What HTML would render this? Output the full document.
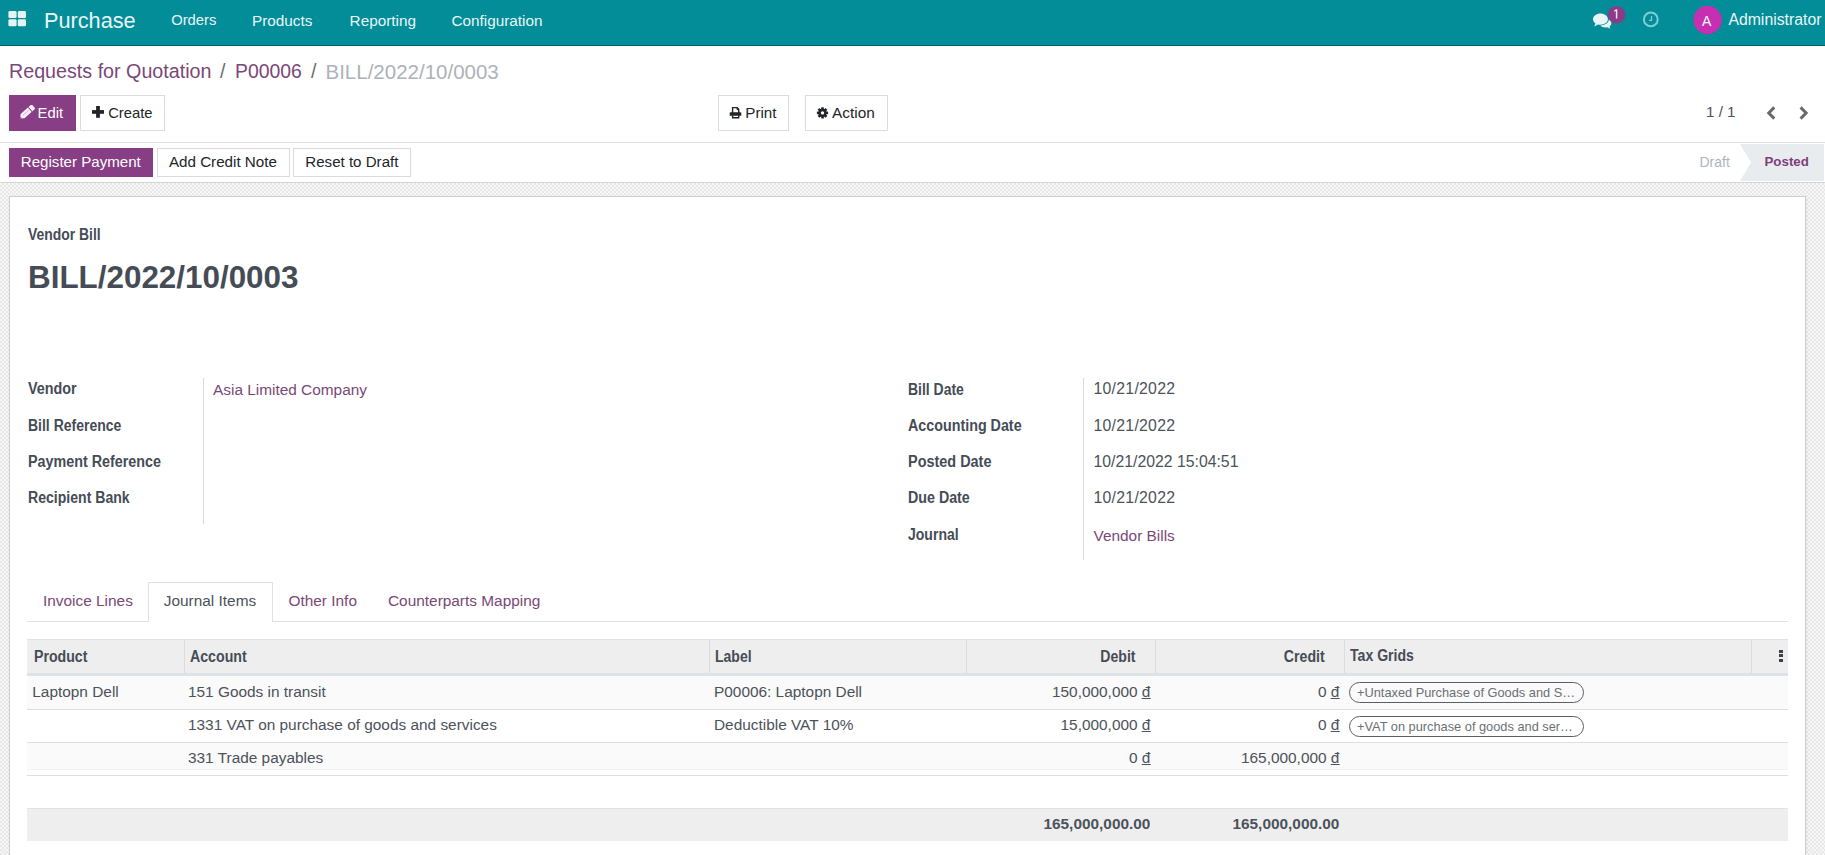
<!DOCTYPE html>
<html><head><meta charset="utf-8">
<style>
*{margin:0;padding:0;box-sizing:border-box}
html,body{width:1825px;height:855px;overflow:hidden;background:#fff;font-family:"Liberation Sans",sans-serif;color:#4c525b}
.a{position:absolute}
.t{position:absolute;white-space:nowrap;line-height:1}
.b{font-weight:bold}
#nav{left:0;top:0;width:1825px;height:46px;background:#028d99;border-bottom:1px solid #035d66}
.nv{color:#e9f6f7;font-size:15.3px}
.btn{position:absolute;border:1px solid #dcdcdc;background:#fff}
.bp{position:absolute;background:#873e84}

#bg{left:0;top:183px;width:1825px;height:672px;
 background-color:#f7f7f7;
 background-image:linear-gradient(45deg,#e8e8e8 25%,transparent 25%,transparent 75%,#e8e8e8 75%),linear-gradient(45deg,#e8e8e8 25%,transparent 25%,transparent 75%,#e8e8e8 75%);
 background-size:4px 4px;background-position:0 0,2px 2px}
#sheet{left:9px;top:196px;width:1797px;height:700px;background:#fff;border:1px solid #cfcfcf;box-shadow:1px 1px 2px rgba(0,0,0,.06)}
.lbl{font-size:15.8px;font-weight:bold;color:#454c56;transform-origin:0 0;margin-top:.7px}
.lbr{transform-origin:100% 0}
.val{font-size:15.4px;color:#4c525b}
.row{position:absolute;left:27px;width:1761px}
.lnk,.val.lnk{color:#7a4878}
.dg{text-decoration:underline;text-underline-offset:1px;text-decoration-thickness:1px}
</style></head><body>
<!-- NAVBAR -->
<div id="nav" class="a"></div>
<svg class="a" style="left:8px;top:11px" width="19" height="16" viewBox="0 0 19 16">
 <rect x="0.4" y="0.1" width="8.2" height="7" rx="1.3" fill="#e6f3f3"/>
 <rect x="9.8" y="0.1" width="8.2" height="7" rx="1.3" fill="#e6f3f3"/>
 <rect x="0.4" y="8.3" width="8.2" height="6.9" rx="1.3" fill="#e6f3f3"/>
 <rect x="9.8" y="8.3" width="8.2" height="6.9" rx="1.3" fill="#e6f3f3"/>
</svg>
<div class="t nv" style="left:44px;top:9.6px;font-size:21.7px">Purchase</div>
<div class="t nv" style="left:171.2px;top:13px;font-size:14.8px">Orders</div>
<div class="t nv" style="left:252px;top:12.6px">Products</div>
<div class="t nv" style="left:349.6px;top:12.6px">Reporting</div>
<div class="t nv" style="left:451.5px;top:12.6px">Configuration</div>

<div class="t nv" style="left:1728.4px;top:11.9px;font-size:15.8px">Administrator</div>

<!-- CONTROL PANEL -->
<div class="t lnk" style="left:9px;top:61.6px;font-size:19.7px">Requests for Quotation</div>
<div class="t" style="left:220px;top:61.6px;font-size:19.7px;color:#6c6c6c">/</div>
<div class="t lnk" style="left:235px;top:61.6px;font-size:19.4px">P00006</div>
<div class="t" style="left:311px;top:61.6px;font-size:19.7px;color:#6c6c6c">/</div>
<div class="t" style="left:325.5px;top:61.6px;font-size:20.5px;color:#adb3b9">BILL/2022/10/0003</div>

<div class="bp" style="left:9px;top:95px;width:67px;height:36px"></div>
<div class="t" style="left:37.6px;top:105.9px;font-size:14.8px;color:#fff">Edit</div>
<div class="btn" style="left:80px;top:95px;width:85px;height:36px"></div>
<div class="t" style="left:108.2px;top:105.9px;font-size:14.8px;color:#212529">Create</div>

<div class="btn" style="left:718px;top:95px;width:71px;height:36px"></div>
<div class="t" style="left:745.3px;top:105px;font-size:15.2px;color:#212529">Print</div>
<div class="btn" style="left:805px;top:95px;width:83px;height:36px"></div>
<div class="t" style="left:832px;top:105px;font-size:15.4px;color:#212529">Action</div>

<div class="t" style="left:1706px;top:104px;font-size:15.2px;color:#4c525b">1 / 1</div>

<div class="a" style="left:0;top:142px;width:1825px;height:1px;background:#dedede"></div>

<!-- STATUS BAR -->
<div class="bp" style="left:9px;top:148px;width:144px;height:29px"></div>
<div class="t" style="left:20.8px;top:154px;font-size:15.1px;color:#fff">Register Payment</div>
<div class="btn" style="left:157px;top:148px;width:133px;height:29px"></div>
<div class="t" style="left:168.9px;top:154px;font-size:15.2px;color:#212529">Add Credit Note</div>
<div class="btn" style="left:293px;top:148px;width:118px;height:29px"></div>
<div class="t" style="left:305.3px;top:154px;font-size:15.1px;color:#212529">Reset to Draft</div>

<div class="t" style="left:1699.5px;top:154.8px;font-size:14px;color:#adb5bd">Draft</div>
<div class="a" style="left:1740px;top:144px;width:84px;height:37px;background:#e9ecef;clip-path:polygon(0 0,100% 0,100% 100%,0 100%,11px 50%)"></div>
<div class="t b" style="left:1764.5px;top:154.6px;font-size:13.3px;color:#7c3f7c">Posted</div>
<div class="a" style="left:0;top:182px;width:1825px;height:1px;background:#d4d4d4"></div>

<!-- BACKGROUND + SHEET -->
<div id="bg" class="a"></div>
<div id="sheet" class="a"></div>

<div class="t lbl" style="left:28.2px;top:226.3px;transform:scaleX(0.881)">Vendor Bill</div>
<div class="t b" style="left:28px;top:261.5px;font-size:31.4px;color:#454c56">BILL/2022/10/0003</div>


<!-- FORM GROUPS -->
<div class="t lbl" style="left:28px;top:380.3px;transform:scaleX(0.909)">Vendor</div>
<div class="t lbl" style="left:28px;top:417.4px;transform:scaleX(0.885)">Bill Reference</div>
<div class="t lbl" style="left:28px;top:453.3px;transform:scaleX(0.907)">Payment Reference</div>
<div class="t lbl" style="left:28px;top:489.6px;transform:scaleX(0.891)">Recipient Bank</div>
<div class="a" style="left:203px;top:378px;width:1px;height:146px;background:#d9d9d9"></div>
<div class="t val lnk" style="left:213px;top:381.7px">Asia Limited Company</div>

<div class="t lbl" style="left:908.3px;top:381.0px;transform:scaleX(0.884)">Bill Date</div>
<div class="t lbl" style="left:908.3px;top:417.3px;transform:scaleX(0.905)">Accounting Date</div>
<div class="t lbl" style="left:908.3px;top:453.3px;transform:scaleX(0.914)">Posted Date</div>
<div class="t lbl" style="left:908.3px;top:489.5px;transform:scaleX(0.902)">Due Date</div>
<div class="t lbl" style="left:908.3px;top:526.4px;transform:scaleX(0.888)">Journal</div>
<div class="a" style="left:1083px;top:378px;width:1px;height:182px;background:#d9d9d9"></div>
<div class="t val" style="left:1093.5px;top:381.4px;font-size:15.8px;letter-spacing:.27px">10/21/2022</div>
<div class="t val" style="left:1093.5px;top:417.7px;font-size:15.8px;letter-spacing:.27px">10/21/2022</div>
<div class="t val" style="left:1093.5px;top:453.7px;font-size:15.8px">10/21/2022 15:04:51</div>
<div class="t val" style="left:1093.5px;top:489.9px;font-size:15.8px;letter-spacing:.27px">10/21/2022</div>
<div class="t val lnk" style="left:1093.5px;top:527.8px">Vendor Bills</div>

<!-- TABS -->
<div class="a" style="left:27px;top:621px;width:1761px;height:1px;background:#dee2e6"></div>
<div class="a" style="left:148px;top:582px;width:125px;height:40px;background:#fff;border:1px solid #dee2e6;border-bottom:none"></div>
<div class="t val lnk" style="left:43px;top:592.9px">Invoice Lines</div>
<div class="t val" style="left:163.8px;top:592.9px">Journal Items</div>
<div class="t val lnk" style="left:288.5px;top:592.9px">Other Info</div>
<div class="t val lnk" style="left:388px;top:592.9px">Counterparts Mapping</div>

<!-- TABLE -->
<div class="a" style="left:27px;top:639px;width:1761px;height:34px;background:#eeeeee;border-top:1px solid #e2e2e2"></div>
<div class="a" style="left:27px;top:673px;width:1761px;height:3px;background:#dee2e6"></div>
<div class="a" style="left:184px;top:640px;width:1px;height:33px;background:#dcdcdc"></div>
<div class="a" style="left:709px;top:640px;width:1px;height:33px;background:#dcdcdc"></div>
<div class="a" style="left:966px;top:640px;width:1px;height:33px;background:#dcdcdc"></div>
<div class="a" style="left:1155px;top:640px;width:1px;height:33px;background:#dcdcdc"></div>
<div class="a" style="left:1344px;top:640px;width:1px;height:33px;background:#dcdcdc"></div>
<div class="a" style="left:1751px;top:640px;width:1px;height:33px;background:#dcdcdc"></div>
<div class="t lbl" style="left:33.5px;top:648.4px;transform:scaleX(0.895)">Product</div>
<div class="t lbl" style="left:189.5px;top:648.4px;transform:scaleX(0.897)">Account</div>
<div class="t lbl" style="left:715.4px;top:648.4px;transform:scaleX(0.887)">Label</div>
<div class="t lbl lbr" style="right:689.5px;top:648.4px;transform:scaleX(0.891)">Debit</div>
<div class="t lbl lbr" style="right:500px;top:648.4px;transform:scaleX(0.894)">Credit</div>
<div class="t lbl" style="left:1350.3px;top:647.2px;transform:scaleX(0.892)">Tax Grids</div>

<div class="a" style="left:27px;top:676px;width:1761px;height:33px;background:#fafafa"></div>
<div class="a" style="left:27px;top:709px;width:1761px;height:1px;background:#dedede"></div>
<div class="a" style="left:27px;top:742px;width:1761px;height:1px;background:#dedede"></div>
<div class="a" style="left:27px;top:743px;width:1761px;height:26px;background:#fafafa"></div>
<div class="a" style="left:27px;top:769px;width:1761px;height:1px;background:#f3f3f3"></div>
<div class="a" style="left:27px;top:775px;width:1761px;height:1px;background:#dedede"></div>

<div class="t val" style="left:32.3px;top:684px">Laptopn Dell</div>
<div class="t val" style="left:188px;top:684px">151 Goods in transit</div>
<div class="t val" style="left:714px;top:684px">P00006: Laptopn Dell</div>
<div class="t val" style="right:674.6px;top:684px">150,000,000 <u><span class="dg">đ</span></u></div>
<div class="t val" style="right:485.6px;top:684px">0 <u><span class="dg">đ</span></u></div>

<div class="t val" style="left:188px;top:716.7px">1331 VAT on purchase of goods and services</div>
<div class="t val" style="left:714px;top:716.7px">Deductible VAT 10%</div>
<div class="t val" style="right:674.6px;top:716.7px">15,000,000 <u><span class="dg">đ</span></u></div>
<div class="t val" style="right:485.6px;top:716.7px">0 <u><span class="dg">đ</span></u></div>

<div class="t val" style="left:188px;top:750.2px">331 Trade payables</div>
<div class="t val" style="right:674.6px;top:750.2px">0 <u><span class="dg">đ</span></u></div>
<div class="t val" style="right:485.6px;top:750.2px">165,000,000 <u><span class="dg">đ</span></u></div>

<div class="a" style="left:1349px;top:682px;width:235px;height:21px;border:1px solid #5a5f66;border-radius:11px"></div>
<div class="t" style="left:1357px;top:686.7px;font-size:12.8px;color:#6c6f74">+Untaxed Purchase of Goods and S…</div>
<div class="a" style="left:1349px;top:716px;width:235px;height:21px;border:1px solid #5a5f66;border-radius:11px"></div>
<div class="t" style="left:1357px;top:720.7px;font-size:12.8px;color:#6c6f74">+VAT on purchase of goods and ser…</div>

<div class="a" style="left:27px;top:808px;width:1761px;height:33px;background:#eeeeee;border-top:1px solid #e2e2e2"></div>
<div class="t b val" style="right:674.6px;top:816px">165,000,000.00</div>
<div class="t b val" style="right:485.6px;top:816px">165,000,000.00</div>


<!-- ICONS -->
<svg class="a" style="left:1590px;top:10px" width="24" height="20" viewBox="0 0 24 20">
 <path d="M10.5 3.5c4.1 0 7.4 2.5 7.4 5.6s-3.3 5.6-7.4 5.6c-.9 0-1.7-.1-2.5-.3L4.2 16.6l1.3-3.2C3.9 12.4 3 10.9 3 9.1 3 6 6.4 3.5 10.5 3.5z" fill="#e9f6f7"/>
 <path d="M18.9 9.5c1.6.9 2.4 2.2 2.4 3.7 0 1.3-.7 2.5-1.9 3.3l.9 2.3-3-1.6c-.6.1-1.2.2-1.9.2-2.2 0-4.1-.8-5.1-2 4.7-.2 8.4-2.4 8.6-5.9z" fill="#e9f6f7"/>
</svg>
<svg class="a" style="left:1607px;top:5px" width="20" height="20" viewBox="0 0 20 20">
 <circle cx="9.6" cy="9.8" r="8.9" fill="#8a3d86"/>
 <path d="M9.6 4.6v9" stroke="#f3dff0" stroke-width="1.5"/><path d="M9.8 4.6L7.2 6.2" stroke="#f3dff0" stroke-width="1.3"/>
</svg>
<svg class="a" style="left:1642px;top:11px" width="18" height="18" viewBox="0 0 18 18">
 <circle cx="8.8" cy="8.4" r="6.9" fill="none" stroke="#7dcfd6" stroke-width="2"/>
 <path d="M9.5 5v4.3H7" fill="none" stroke="#7dcfd6" stroke-width="1.3"/>
</svg>
<svg class="a" style="left:1692px;top:5px" width="31" height="31" viewBox="0 0 31 31">
 <circle cx="15.6" cy="15" r="14.2" fill="#c62fb2"/>
</svg>
<div class="t" style="left:1702px;top:13.6px;font-size:14px;color:#fff">A</div>

<svg class="a" style="left:19px;top:105px" width="16" height="15" viewBox="0 0 16 15">
 <g transform="translate(7.6,7.6) rotate(-42)">
  <path d="M-8.8 0 L-5.4 -2.9 L8.2 -2.9 Q9.3 -2.9 9.3 -1.8 L9.3 1.8 Q9.3 2.9 8.2 2.9 L-5.4 2.9 Z" fill="#fbeefa"/>
  <rect x="4.3" y="-2.9" width="0.9" height="5.8" fill="#873e84"/>
  <rect x="-4.6" y="-0.6" width="8" height="0.5" fill="#b07aab"/>
  <path d="M-8.8 0 L-7.2 -1.3 L-7.2 1.3 Z" fill="#873e84"/>
 </g>
</svg>
<svg class="a" style="left:92px;top:106px" width="12" height="12" viewBox="0 0 12 12">
 <rect x="0" y="4.1" width="12" height="3.7" fill="#212529"/>
 <rect x="4.1" y="0" width="3.8" height="11.8" fill="#212529"/>
</svg>
<svg class="a" style="left:729px;top:106px" width="13" height="13" viewBox="0 0 13 13">
 <path d="M3.6 7V1.6h4.6l1.5 1.6V7" fill="none" stroke="#212529" stroke-width="1.4" stroke-linejoin="miter"/>
 <path d="M8 1.2v2.3h2" fill="none" stroke="#212529" stroke-width="1"/>
 <path d="M1.6 6.2h9.8c.6 0 .9.4.9.9v2.6H.7V7.1c0-.5.3-.9.9-.9z" fill="#212529"/>
 <path d="M3.6 9.2v2.6h6.1V9.2" fill="none" stroke="#212529" stroke-width="1.4"/>
</svg>
<svg class="a" style="left:816px;top:106px" width="13" height="13" viewBox="0 0 13 13">
 <g transform="translate(6.5,6.9)" fill="#212529">
  <rect x="-1.3" y="-5.6" width="2.6" height="11.2"/>
  <rect x="-1.3" y="-5.6" width="2.6" height="11.2" transform="rotate(45)"/>
  <rect x="-1.3" y="-5.6" width="2.6" height="11.2" transform="rotate(90)"/>
  <rect x="-1.3" y="-5.6" width="2.6" height="11.2" transform="rotate(135)"/>
  <circle r="4.1"/>
  <circle r="1.7" fill="#fff"/>
 </g>
</svg>
<svg class="a" style="left:1762px;top:103px" width="50" height="20" viewBox="0 0 50 20">
 <path d="M12.3 4.4 L6.8 10 L12.3 15.6" fill="none" stroke="#6a6a6a" stroke-width="3"/>
 <path d="M38.6 4.4 L44.1 10 L38.6 15.6" fill="none" stroke="#6a6a6a" stroke-width="3"/>
</svg>
<div class="a" style="left:1779px;top:649.5px;width:3.5px;height:3px;background:#3d4148"></div>
<div class="a" style="left:1779px;top:654.2px;width:3.5px;height:3px;background:#3d4148"></div>
<div class="a" style="left:1779px;top:658.8px;width:3.5px;height:3px;background:#3d4148"></div>

</body></html>
